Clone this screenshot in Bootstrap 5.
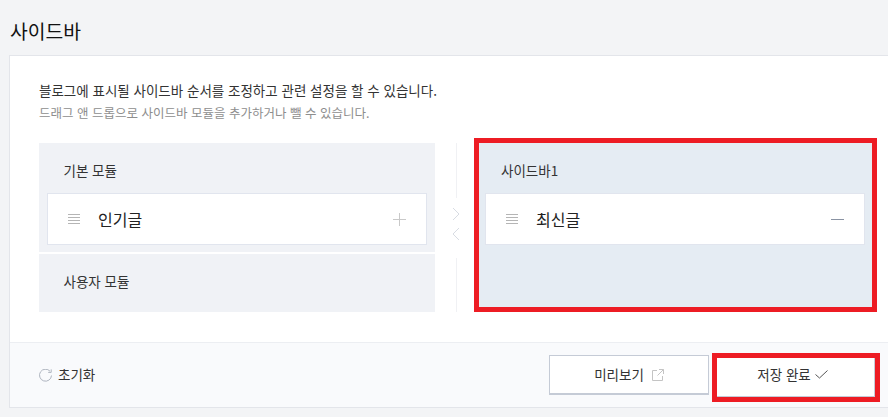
<!DOCTYPE html>
<html lang="ko">
<head>
<meta charset="utf-8">
<title>사이드바</title>
<link href="https://cdn.jsdelivr.net/npm/bootstrap@5.3.0/dist/css/bootstrap.min.css" rel="stylesheet">
<style>
html,body{height:417px;overflow:hidden}
body{background:#f3f4f6;font-family:"Noto Sans CJK KR","Noto Sans",sans-serif;color:#222}
.page-head{height:55px;padding:20px 0 0 10px}
.page-head h1{font-size:19.3px;line-height:22px;font-weight:400;margin:0;color:#111}
.panel-box{margin-left:9px;height:353px;background:#fff;border:1px solid #e3e5ea;border-right:0}
.panel-body-area{height:286px;padding:25px 11px 0 29px}
.lead-line{font-size:13.5px;line-height:18px;color:#333;margin:0}
.sub-line{font-size:12.5px;line-height:18px;color:#8e8e8e;margin:5px 0 0}
.cols{margin-top:21px;height:169px}
.left-col{width:396px}
.mod-a{height:109px;background:#f0f2f6;padding:0 8px}
.mod-b{height:58px;margin-top:2px;background:#f0f2f6;padding:0 24.5px}
.mod-title{font-size:13.5px;line-height:18px;color:#333}
.mod-a .mod-title{padding:18px 0 14px 16.5px}
.mod-b .mod-title{padding-top:18px}
.mid-col{width:39px;padding-left:21px}
.vline{width:1px;background:#f0f1f4;flex:1 1 0}
.arrows{height:60px;margin-left:-4px;gap:6px;padding-top:9px}
.right-col{width:403px;margin-top:-5px;height:174px;border:5px solid #ed1c24;background:#e5ecf3;padding:0 7px 0 6px}
.right-col .mod-title{padding:18px 0 14px 16px}
.item-row{height:52px;background:#fff;border:1px solid #e1e5ee;padding:0 20px;font-size:16px;color:#222}
.item-name{margin-left:18px;flex:1;padding-bottom:1px}
.foot-bar{height:65px;background:#f9fafc;border-top:1px solid #eceef2;padding-left:29px}
.reset-txt{font-size:13.5px;color:#333;margin-left:6px;padding-bottom:2px}
.btn-line{width:160px;height:40px;background:#fff;border:1px solid #c5cbd6;border-bottom-width:2px;border-radius:0;font-size:13.5px;color:#333;padding:0}
.btn-line:hover{background:#fff}
.save-frame{width:168px;height:49px;margin:5px 8px 0 3px;border:5px solid #ed1c24}
.save-frame .btn-line{width:100%;height:100%;border-width:0 1px 1px 0;padding:0 6px 5px 0}
svg{display:block;flex:none}
</style>
</head>
<body>
<div class="page-head"><h1>사이드바</h1></div>
<div class="panel-box">
  <div class="panel-body-area">
    <p class="lead-line">블로그에 표시될 사이드바 순서를 조정하고 관련 설정을 할 수 있습니다.</p>
    <p class="sub-line">드래그 앤 드롭으로 사이드바 모듈을 추가하거나 뺄 수 있습니다.</p>
    <div class="d-flex cols">
      <div class="left-col">
        <div class="mod-a">
          <div class="mod-title">기본 모듈</div>
          <div class="item-row d-flex align-items-center">
            <svg width="12" height="10" viewBox="0 0 12 10" stroke="#b5b5b5" fill="none"><path d="M0 .5h12M0 3.5h12M0 6.5h12M0 9.5h12"/></svg>
            <span class="item-name">인기글</span>
            <svg width="13" height="13" viewBox="0 0 13 13" stroke="#c9c9c9" fill="none"><path d="M0 6.5h13M6.500 0v13"/></svg>
          </div>
        </div>
        <div class="mod-b"><div class="mod-title">사용자 모듈</div></div>
      </div>
      <div class="mid-col d-flex flex-column">
        <div class="vline"></div>
        <div class="arrows d-flex flex-column">
          <svg width="8" height="14" viewBox="0 0 8 14" stroke="#d8dce3" fill="none"><path d="M1 1l6 6-6 6"/></svg>
          <svg width="8" height="14" viewBox="0 0 8 14" stroke="#d8dce3" fill="none"><path d="M7 1L1 7l6 6"/></svg>
        </div>
        <div class="vline"></div>
      </div>
      <div class="right-col">
        <div class="mod-title">사이드바1</div>
        <div class="item-row d-flex align-items-center">
          <svg width="12" height="10" viewBox="0 0 12 10" stroke="#b5b5b5" fill="none"><path d="M0 .5h12M0 3.5h12M0 6.5h12M0 9.5h12"/></svg>
          <span class="item-name">최신글</span>
          <svg width="13" height="1" viewBox="0 0 13 1" stroke="#8a93a3" fill="none"><path d="M0 .5h13"/></svg>
        </div>
      </div>
    </div>
  </div>
  <div class="foot-bar d-flex align-items-center">
    <svg width="13" height="13" viewBox="0 0 13 13" stroke="#aeb4bf" fill="none"><path d="M11 2.2A6 6 0 1 0 12.5 6.5"/><path d="M12.2.4v3h-3"/></svg>
    <span class="reset-txt flex-grow-1">초기화</span>
    <button type="button" class="btn btn-line d-flex align-items-center justify-content-center gap-2">미리보기
      <svg width="12" height="12" viewBox="0 0 12 12" stroke="#c4c4c4" fill="none"><path d="M5 1.500H.5v10h10V7M7 .5h4.500V5M11.500.5L5.500 6.500"/></svg>
    </button>
    <div class="save-frame">
      <button type="button" class="btn btn-line d-flex align-items-center justify-content-center gap-1">저장 완료
        <svg width="13" height="9" viewBox="0 0 13 9" stroke="#555" fill="none"><path d="M.5 4.500l4 3.500L12.500.5"/></svg>
      </button>
    </div>
  </div>
</div>
</body>
</html>
